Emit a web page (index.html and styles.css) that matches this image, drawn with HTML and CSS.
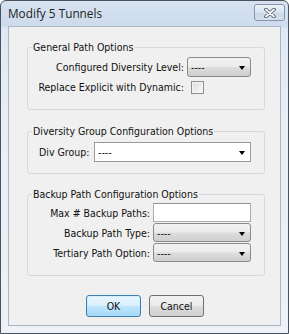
FILE: index.html
```html
<!DOCTYPE html>
<html>
<head>
<meta charset="utf-8">
<link rel="stylesheet" href="styles.css">
</head>
<body>
<div class="window">
  <div class="titlebar">
    <span class="title">Modify 5 Tunnels</span>
    <div class="close">
      <svg width="14" height="10" viewBox="0 0 14 10">
        <path d="M3 1.5 L11 8.5 M11 1.5 L3 8.5" stroke="#4b5669" stroke-width="3.6" stroke-linecap="round" fill="none"/>
        <path d="M3 1.5 L11 8.5 M11 1.5 L3 8.5" stroke="#ffffff" stroke-width="1.8" stroke-linecap="round" fill="none"/>
      </svg>
    </div>
  </div>
  <div class="client">
    <fieldset class="group">
      <legend>General Path Options</legend>
      <div class="rows rows-general">
        <span class="label">Configured Diversity Level:</span>
        <div class="combo"><span>----</span><span class="arrow"></span></div>
        <span class="label">Replace Explicit with Dynamic:</span>
        <span class="check"></span>
      </div>
    </fieldset>
    <fieldset class="group group2">
      <legend>Diversity Group Configuration Options</legend>
      <div class="rows rows-div">
        <span class="label left">Div Group:</span>
        <div class="combo white"><span>----</span><span class="arrow"></span></div>
      </div>
    </fieldset>
    <fieldset class="group group3">
      <legend>Backup Path Configuration Options</legend>
      <div class="rows rows-backup">
        <span class="label">Max # Backup Paths:</span>
        <div class="field"></div>
        <span class="label">Backup Path Type:</span>
        <div class="combo"><span>----</span><span class="arrow"></span></div>
        <span class="label">Tertiary Path Option:</span>
        <div class="combo"><span>----</span><span class="arrow"></span></div>
      </div>
    </fieldset>
    <div class="buttons">
      <button class="btn ok">OK</button>
      <button class="btn">Cancel</button>
    </div>
  </div>
</div>
</body>
</html>
```
FILE: styles.css
```css
html, body {
  margin: 0;
  padding: 0;
  background: #ffffff;
}
.window {
  width: 289px;
  height: 334px;
  box-sizing: border-box;
  border: 1px solid #4a525e;
  border-radius: 6px 6px 0 0;
  background: linear-gradient(#d6e2f0 0px, #cddbec 24px, #dfe8f3 28px, #e9eef5 120px, #eef1f5 334px);
  padding: 0 7px 7px 7px;
  display: flex;
  flex-direction: column;
  font-family: "DejaVu Sans Condensed", "DejaVu Sans", sans-serif;
  font-stretch: condensed;
  font-size: 10.5px;
  color: #111;
}
.titlebar {
  height: 25px;
  display: flex;
  align-items: center;
  justify-content: space-between;
  margin-right: -4px;
}
.title {
  font-family: "Open Sans", "Noto Sans", sans-serif;
  font-stretch: normal;
  font-size: 11.8px;
  color: #222;
  margin-top: -1px;
}
.close {
  width: 29px;
  height: 15px;
  border: 1px solid #8796ab;
  border-radius: 3px;
  background: linear-gradient(#eef3f9, #d8e2ee 50%, #cbd7e6 51%, #d6e0ec);
  display: flex;
  align-items: center;
  justify-content: center;
  margin-top: -2px;
}
.client {
  flex: 1;
  border: 1px solid #a9b6c6;
  background: #f0f0f0;
  display: flex;
  flex-direction: column;
  padding-top: 14px;
}
.group {
  margin: 0 0 0 18px;
  width: 238px;
  box-sizing: border-box;
  border: 1px solid #d5d9de;
  border-radius: 3px;
  padding: 0;
  min-inline-size: 0;
}
.group2 { margin-top: 15px; }
.group3 { margin-top: 14px; }
.group legend {
  margin-left: 4px;
  padding: 0 1px;
  line-height: 13px;
  font-size: 10.5px;
}
.rows {
  display: grid;
  align-items: center;
}
.rows-general {
  grid-template-columns: 1fr 64px;
  grid-auto-rows: 20px;
  column-gap: 3px;
  padding: 3px 13px 12px 0;
}
.rows-div {
  grid-template-columns: 55px 1fr;
  grid-auto-rows: 20px;
  padding: 4px 13px 11px 11px;
}
.rows-backup {
  grid-template-columns: 1fr 98px;
  grid-auto-rows: 19px;
  row-gap: 1px;
  column-gap: 3px;
  padding: 2px 13px 13px 0;
}
.label {
  justify-self: end;
  white-space: nowrap;
}
.label.left { justify-self: start; }
.combo {
  height: 100%;
  box-sizing: border-box;
  border: 1px solid #8a8a8a;
  border-radius: 3px;
  background: linear-gradient(#f3f3f3, #ebebeb 48%, #dddddd 52%, #cfcfcf);
  display: flex;
  align-items: center;
  justify-content: space-between;
  padding: 0 5px 0 3px;
}
.combo.white {
  background: #ffffff;
  border: 1px solid #9a9a9a;
  border-radius: 0;
}
.arrow {
  width: 0;
  height: 0;
  border-left: 3.5px solid transparent;
  border-right: 3.5px solid transparent;
  border-top: 4px solid #000;
  margin-top: 2px;
}
.check {
  width: 13px;
  height: 13px;
  box-sizing: border-box;
  border: 1px solid #8e8f8f;
  background: linear-gradient(135deg, #dcdcdc, #fbfbfb);
  box-shadow: inset 0 0 0 1px #f4f4f4;
  margin-left: 4px;
}
.field {
  height: 100%;
  box-sizing: border-box;
  border: 1px solid #abadb3;
  border-top-color: #8f929a;
  background: #ffffff;
}
.buttons {
  display: flex;
  justify-content: center;
  gap: 8px;
  margin-top: 19px;
  padding-left: 1px;
}
.btn {
  width: 55px;
  height: 22px;
  box-sizing: border-box;
  border: 1px solid #707070;
  border-radius: 3px;
  background: linear-gradient(#f2f2f2, #ebebeb 48%, #dddddd 52%, #cfcfcf);
  font-family: "DejaVu Sans Condensed", "DejaVu Sans", sans-serif;
  font-stretch: condensed;
  font-size: 10.5px;
  color: #111;
  padding: 0;
}
.btn.ok {
  border-color: #3c7fb1;
  background: linear-gradient(#eaf6fd, #d9f0fc 48%, #bee6fd 52%, #a7d9f5);
  box-shadow: inset 0 0 0 1px #8ee2fb40;
}
```
